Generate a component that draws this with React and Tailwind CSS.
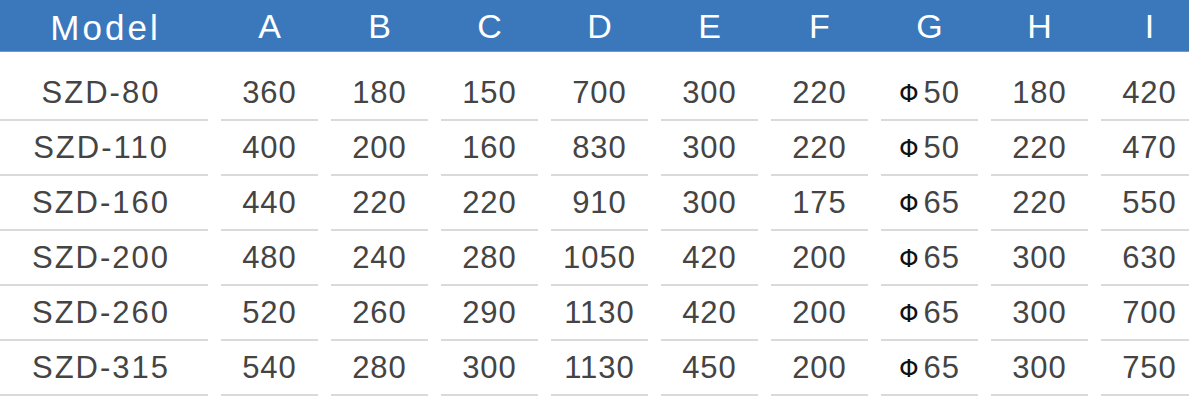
import React from 'react';

const headers = ['A', 'B', 'C', 'D', 'E', 'F', 'G', 'H', 'I'];

const rows = [
  ['SZD-80', '360', '180', '150', '700', '300', '220', '50', '180', '420'],
  ['SZD-110', '400', '200', '160', '830', '300', '220', '50', '220', '470'],
  ['SZD-160', '440', '220', '220', '910', '300', '175', '65', '220', '550'],
  ['SZD-200', '480', '240', '280', '1050', '420', '200', '65', '300', '630'],
  ['SZD-260', '520', '260', '290', '1130', '420', '200', '65', '300', '700'],
  ['SZD-315', '540', '280', '300', '1130', '450', '200', '65', '300', '750'],
];

const grid = 'grid grid-cols-[208px_repeat(9,97px)] gap-x-[13px]';

function Cell({ children }) {
  return (
    <div className="h-[55px] flex items-center justify-center border-b-2 border-[#dadada] pt-[2px]">
      {children}
    </div>
  );
}

export default function App() {
  return (
    <div className="w-[1189px] h-[403px] overflow-hidden bg-white font-['Liberation_Sans',Arial,sans-serif]">
      {/* Header */}
      <div className="h-[52px] bg-[#3b78bb] border-b border-[#6a9bd0]">
        <div className={`${grid} h-full`}>
          <div className="flex items-center justify-center pt-[2px] text-[35px] text-white tracking-[3px] pl-[3px]">Model</div>
          {headers.map((h) => (
            <div key={h} className="flex items-center justify-center pb-[2px] text-[34px] text-white">
              {h}
            </div>
          ))}
        </div>
      </div>

      {/* Body */}
      <div className="pt-[14px]">
        {rows.map((r) => (
          <div key={r[0]} className={grid}>
            {r.map((v, i) => (
              <Cell key={i}>
                {i === 7 ? (
                  <span className="flex items-center text-[31px] text-[#444] tracking-[1px]">
                    <span className="text-[25px] text-[#111] mr-[4px] font-['DejaVu_Sans',sans-serif]">Φ</span>
                    {v}
                  </span>
                ) : (
                  <span className={`text-[31px] text-[#444] ${i === 0 ? 'tracking-[2px] pr-[6px]' : 'tracking-[1px]'}`}>
                    {v}
                  </span>
                )}
              </Cell>
            ))}
          </div>
        ))}
      </div>
    </div>
  );
}
